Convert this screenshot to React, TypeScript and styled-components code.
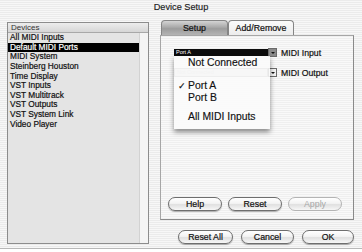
import styled, { createGlobalStyle } from 'styled-components'

const GlobalStyle = createGlobalStyle`
  body {
    margin: 0;
    background: #ffffff;
    font-family: "Liberation Sans", Arial, sans-serif;
  }
  button {
    font-family: inherit;
  }
`

const stripes = (a: string, b: string) =>
  `repeating-linear-gradient(to bottom, ${a} 0px, ${a} 1px, ${b} 1px, ${b} 2px)`

const Window = styled.div`
  width: 362px;
  height: 248px;
  background: ${stripes('#ebebeb', '#f7f7f7')};
  border-bottom: 1px solid #b8b8b8;
  display: flex;
  flex-direction: column;
  overflow: hidden;
`

const TitleBar = styled.div`
  height: 14px;
  display: flex;
  align-items: center;
  justify-content: center;
  font-size: 9.2px;
  color: #1a1a1a;
  -webkit-text-stroke: 0.15px #1a1a1a;
`

const Body = styled.div`
  display: flex;
  gap: 11px;
  padding: 5px 0 0 7px;
`

/* device list on the left */
const DeviceList = styled.div`
  margin-top: 3px;
  width: 142px;
  height: 222px;
  box-sizing: border-box;
  border: 1px solid #8c8c8c;
  background: #e4e4e4;
  display: flex;
  flex-direction: column;
`

const ListHeader = styled.div`
  height: 9px;
  line-height: 9px;
  font-size: 8px;
  color: #333;
  padding-left: 3px;
  background: linear-gradient(#ececec, #d6d6d6);
  border-bottom: 1px solid #a8a8a8;
`

const ListBody = styled.div`
  flex: 1;
  display: flex;
`

const Items = styled.div`
  flex: 1;
`

const ScrollTrack = styled.div`
  width: 8px;
  background: #f4f4f4;
  border-left: 1px solid #d2d2d2;
`

const Item = styled.div<{ $selected?: boolean }>`
  height: 9.65px;
  line-height: 9.65px;
  font-size: 8.3px;
  padding-left: 2px;
  white-space: nowrap;
  color: ${p => (p.$selected ? '#fff' : '#111')};
  -webkit-text-stroke: 0.2px ${p => (p.$selected ? '#fff' : '#111')};
  background: ${p => (p.$selected ? '#000' : 'transparent')};
`

/* right side: tabs, panel, dialog buttons */
const RightColumn = styled.div`
  width: 194px;
  display: flex;
  flex-direction: column;
`

const Tabs = styled.div`
  height: 16px;
  display: flex;
  align-items: flex-end;
  padding-left: 1px;
`

const Tab = styled.div<{ $active?: boolean; $w: number }>`
  width: ${p => p.$w}px;
  height: 15px;
  box-sizing: border-box;
  border: 1px solid #858585;
  border-bottom: none;
  border-radius: 4px 4px 0 0;
  font-size: 8.8px;
  display: flex;
  align-items: center;
  justify-content: center;
  color: #111;
  -webkit-text-stroke: 0.2px #111;
  background: ${p =>
    p.$active ? 'linear-gradient(#d4d4d4, #a9a9a9 45%, #9c9c9c 55%, #b4b4b4)' : 'linear-gradient(#fbfbfb, #ececec)'};
`

const Panel = styled.div`
  position: relative;
  height: 185px;
  box-sizing: border-box;
  border: 1px solid #a6a6a6;
  border-right-color: #8a8a8a;
  border-bottom-color: #8a8a8a;
  background: ${stripes('#efefef', '#f9f9f9')};
  padding: 12px 0 0 13px;
  display: flex;
  flex-direction: column;
`

const PopupRow = styled.div`
  display: flex;
  align-items: center;
  gap: 4px;
  height: 9px;
  margin-bottom: 11px;
`

const Popup = styled.div`
  width: 103px;
  height: 9px;
  display: flex;
  align-items: center;
`

const PopupField = styled.div<{ $dark?: boolean }>`
  flex: 1;
  height: 7px;
  line-height: 7px;
  font-size: 5.5px;
  padding-left: 2px;
  color: ${p => (p.$dark ? '#fff' : '#bbb')};
  background: ${p => (p.$dark ? '#0c0c0c' : '#d8d8d8')};
  border: ${p => (p.$dark ? 'none' : '1px solid #999')};
`

const PopupArrow = styled.div<{ $dark?: boolean }>`
  width: 9px;
  height: 9px;
  box-sizing: border-box;
  border: 1px solid #6a6a6a;
  background: ${p => (p.$dark ? '#8a8a8a' : '#f2f2f2')};
  display: flex;
  align-items: center;
  justify-content: center;
  &::after {
    content: '';
    border-left: 2px solid transparent;
    border-right: 2px solid transparent;
    border-top: 2px solid #111;
  }
`

const FieldLabel = styled.span`
  font-size: 8.7px;
  color: #111;
  -webkit-text-stroke: 0.2px #111;
`

const PanelButtons = styled.div`
  margin-top: auto;
  margin-bottom: 8px;
  margin-left: -6px;
  display: flex;
  gap: 6px;
`

const DialogButtons = styled.div`
  margin-top: 10px;
  display: flex;
  justify-content: flex-end;
  gap: 8px;
`

const PillButton = styled.button<{ $w: number }>`
  width: ${p => p.$w}px;
  height: 14px;
  padding: 0;
  border: 1px solid #6e6e6e;
  border-radius: 8px;
  font-size: 8.8px;
  color: #111;
  -webkit-text-stroke: 0.2px #111;
  background: linear-gradient(#ffffff, #f3f3f3 45%, #e0e0e0 55%, #f7f7f7);
  box-shadow: 0 1px 1px rgba(0, 0, 0, 0.3);
  &:disabled {
    color: #a8a8a8;
    -webkit-text-stroke: 0;
    border-color: #b4b4b4;
    box-shadow: none;
  }
`

/* open popup menu, slightly see-through like Aqua menus */
const Menu = styled.div`
  position: absolute;
  left: 13px;
  top: 20px;
  width: 96px;
  padding: 1px 0 6px;
  background: rgba(251, 251, 251, 0.86);
  box-shadow: 0 3px 5px rgba(0, 0, 0, 0.45);
`

const MenuItem = styled.div<{ $gapBefore?: number }>`
  position: relative;
  height: 12px;
  line-height: 12px;
  margin-top: ${p => p.$gapBefore ?? 0}px;
  font-size: 10.4px;
  padding-left: 14px;
  color: #111;
  -webkit-text-stroke: 0.15px #111;
  white-space: nowrap;
`

const Check = styled.span`
  position: absolute;
  left: 4px;
  font-size: 9px;
`

const devices = [
  'All MIDI Inputs',
  'Default MIDI Ports',
  'MIDI System',
  'Steinberg Houston',
  'Time Display',
  'VST Inputs',
  'VST Multitrack',
  'VST Outputs',
  'VST System Link',
  'Video Player',
]

export default function App() {
  return (
    <>
      <GlobalStyle />
      <Window>
        <TitleBar>Device Setup</TitleBar>
        <Body>
          <DeviceList>
            <ListHeader>Devices</ListHeader>
            <ListBody>
              <Items>
                {devices.map(d => (
                  <Item key={d} $selected={d === 'Default MIDI Ports'}>
                    {d}
                  </Item>
                ))}
              </Items>
              <ScrollTrack />
            </ListBody>
          </DeviceList>

          <RightColumn>
            <Tabs>
              <Tab $active $w={67}>Setup</Tab>
              <Tab $w={66}>Add/Remove</Tab>
            </Tabs>
            <Panel>
              <PopupRow>
                <Popup>
                  <PopupField $dark>Port A</PopupField>
                  <PopupArrow $dark />
                </Popup>
                <FieldLabel>MIDI Input</FieldLabel>
              </PopupRow>
              <PopupRow>
                <Popup>
                  <PopupField>Not Connected</PopupField>
                  <PopupArrow />
                </Popup>
                <FieldLabel>MIDI Output</FieldLabel>
              </PopupRow>

              <Menu>
                <MenuItem>Not Connected</MenuItem>
                <MenuItem $gapBefore={11}>
                  <Check>✓</Check>Port A
                </MenuItem>
                <MenuItem>Port B</MenuItem>
                <MenuItem $gapBefore={7}>All MIDI Inputs</MenuItem>
              </Menu>

              <PanelButtons>
                <PillButton $w={54}>Help</PillButton>
                <PillButton $w={54}>Reset</PillButton>
                <PillButton $w={54} disabled>
                  Apply
                </PillButton>
              </PanelButtons>
            </Panel>
            <DialogButtons>
              <PillButton $w={55}>Reset All</PillButton>
              <PillButton $w={53}>Cancel</PillButton>
              <PillButton $w={52}>OK</PillButton>
            </DialogButtons>
          </RightColumn>
        </Body>
      </Window>
    </>
  )
}
